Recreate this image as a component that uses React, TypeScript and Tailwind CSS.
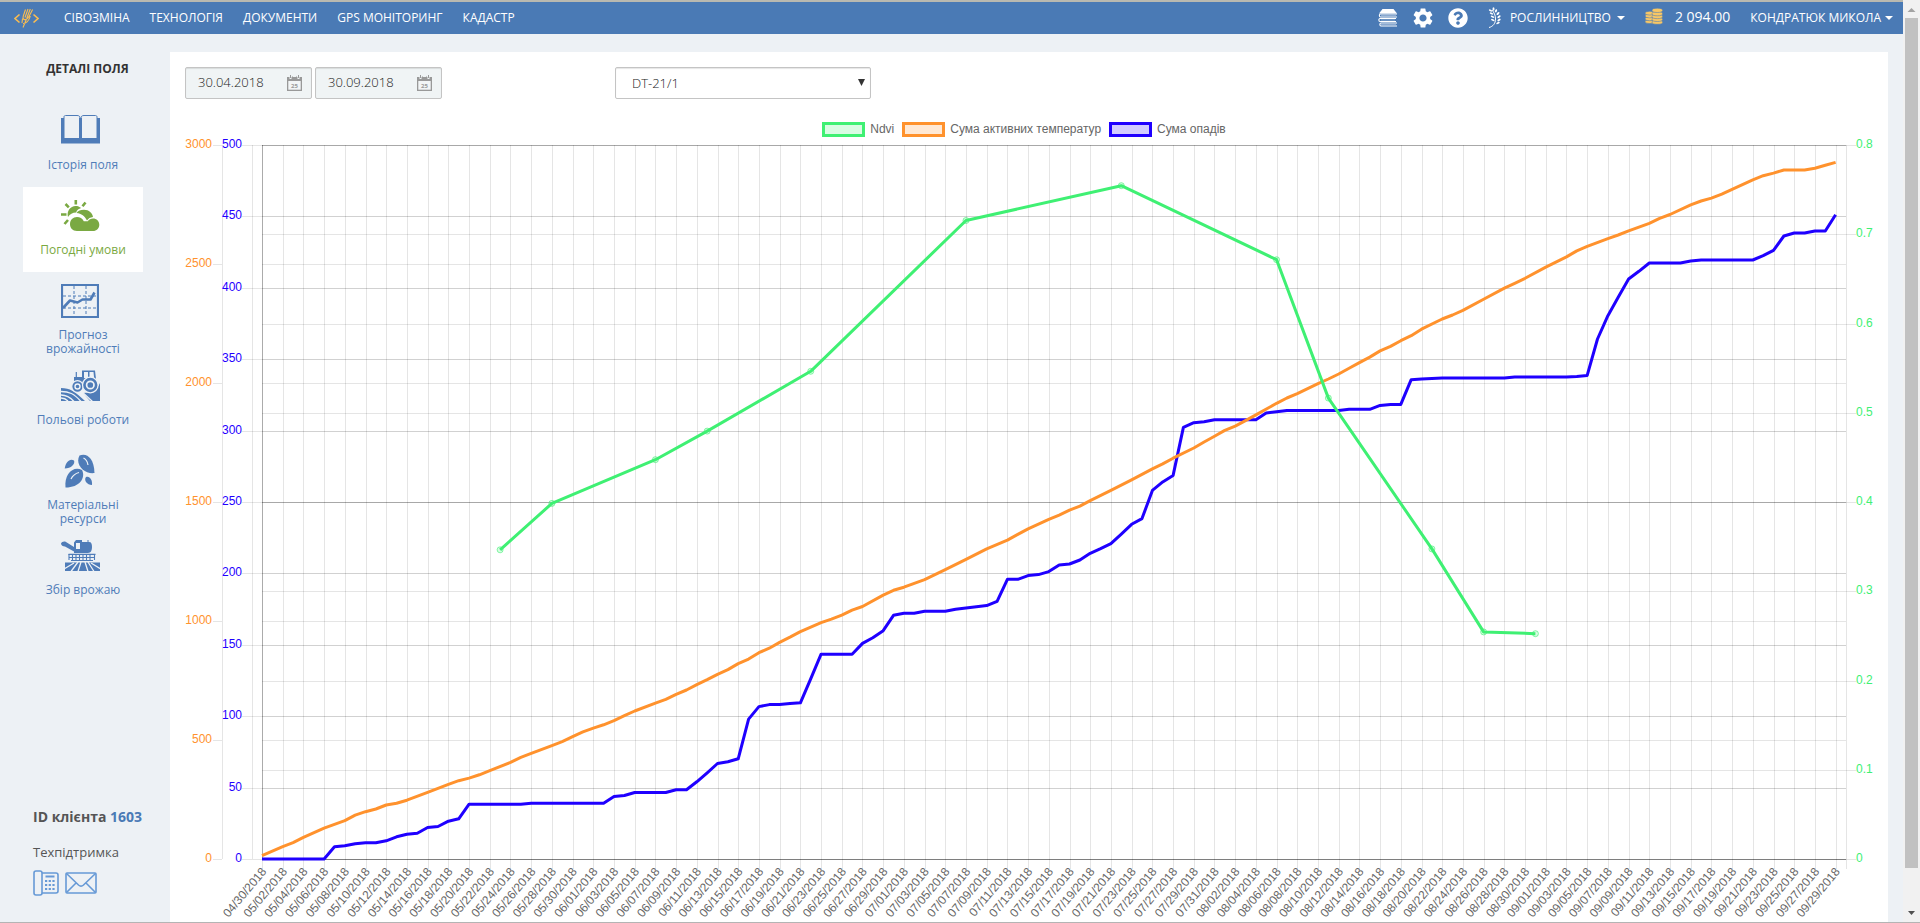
import type { ReactNode } from "react";
import { MdSettings } from "react-icons/md";
import { FaQuestionCircle } from "react-icons/fa";

type Point = [day: number, value: number];

const NAV = ["СІВОЗМІНА", "ТЕХНОЛОГІЯ", "ДОКУМЕНТИ", "GPS МОНІТОРИНГ", "КАДАСТР"];

const NDVI: Point[] = [
  [23, 0.347], [28, 0.399], [38, 0.448], [43, 0.48], [53, 0.547], [68, 0.716], [83, 0.755],
  [98, 0.672], [103, 0.517], [113, 0.348], [118, 0.255], [123, 0.253],
];

const TEMPERATURE: Point[] = [
  [0, 16], [2, 54], [3, 71], [4, 93], [6, 132], [8, 163], [9, 186], [10, 201], [11, 212], [12, 229],
  [13, 236], [14, 249], [16, 282], [18, 316], [19, 331], [20, 342], [21, 356], [22, 373], [24, 408],
  [25, 429], [26, 446], [28, 478], [29, 495], [30, 516], [31, 536], [32, 552], [33, 566], [34, 583],
  [35, 604], [36, 624], [38, 657], [39, 673], [40, 694], [41, 712], [42, 735], [43, 756], [44, 778],
  [45, 798], [46, 823], [47, 842], [48, 869], [49, 888], [50, 912], [51, 934], [52, 957], [54, 995],
  [55, 1010], [56, 1027], [57, 1048], [58, 1063], [60, 1111], [61, 1131], [62, 1144], [64, 1176],
  [66, 1218], [68, 1261], [70, 1305], [72, 1342], [73, 1366], [74, 1389], [76, 1429], [77, 1447],
  [78, 1468], [79, 1485], [80, 1508], [82, 1551], [84, 1595], [86, 1641], [87, 1662], [88, 1686],
  [90, 1729], [91, 1754], [92, 1778], [93, 1803], [94, 1821], [95, 1844], [96, 1868], [98, 1917],
  [99, 1939], [100, 1957], [102, 1999], [103, 2019], [104, 2040], [105, 2064], [106, 2088],
  [107, 2111], [108, 2137], [109, 2156], [110, 2180], [111, 2201], [112, 2228], [114, 2271],
  [115, 2288], [116, 2307], [118, 2354], [120, 2401], [121, 2421], [122, 2442], [124, 2489],
  [126, 2532], [127, 2557], [128, 2576], [130, 2609], [131, 2624], [132, 2641], [134, 2673],
  [135, 2694], [136, 2710], [138, 2751], [139, 2767], [140, 2779], [141, 2796], [142, 2816],
  [144, 2856], [145, 2873], [146, 2884], [147, 2897], [149, 2897], [150, 2904], [151, 2917], [152, 2929],
];

const RAIN: Point[] = [
  [0, 0.4], [6, 0.4], [7, 8.9], [8, 9.6], [9, 11], [10, 11.7], [11, 11.7], [12, 13.1], [13, 15.9],
  [14, 17.7], [15, 18.4], [16, 22.4], [17, 23.1], [18, 26.8], [19, 28.5], [20, 38.7], [25, 38.7],
  [26, 39.4], [33, 39.4], [34, 44.1], [35, 44.8], [36, 46.9], [39, 46.9], [40, 48.8], [41, 48.8],
  [42, 54.4], [43, 60.7], [44, 67.2], [45, 68.4], [46, 70.5], [47, 98.3], [48, 107.1], [49, 108.5],
  [50, 108.5], [51, 109.2], [52, 109.7], [53, 126.5], [54, 143.8], [57, 143.8], [58, 151.3],
  [59, 155.3], [60, 160.2], [61, 171], [62, 172.4], [63, 172.4], [64, 173.8], [66, 173.8],
  [67, 175.2], [68, 176.1], [69, 177], [70, 177.8], [71, 180.8], [72, 196.2], [73, 196.2],
  [74, 198.8], [75, 199.5], [76, 201.6], [77, 206.3], [78, 206.9], [79, 209.7], [80, 214.4],
  [81, 217.7], [82, 221.2], [83, 227.9], [84, 234.7], [85, 238.7], [86, 258.5], [87, 264.4],
  [88, 269], [89, 302.6], [90, 305.9], [91, 306.6], [92, 308], [96, 308], [97, 312.7], [98, 313.6],
  [99, 314.5], [104, 314.5], [105, 315.3], [107, 315.3], [108, 318], [109, 318.7], [110, 318.7],
  [111, 336], [112, 336.5], [113, 336.8], [114, 337.2], [120, 337.2], [121, 337.9], [126, 337.9],
  [127, 338.3], [128, 339], [129, 364.5], [130, 380.8], [131, 393.7], [132, 406.5], [133, 411.9],
  [134, 417.7], [137, 417.7], [138, 419.1], [139, 419.8], [144, 419.8], [145, 422.8], [146, 426.6],
  [147, 436.6], [148, 438.7], [149, 438.7], [150, 440.1], [151, 440.1], [152, 451.5],
];

const LEGEND = [
  { label: "Ndvi", box: "border-[#3ff073] bg-[#d9fce3]" },
  { label: "Сума активних температур", box: "border-[#ff922d] bg-[#ffe9d5]" },
  { label: "Сума опадів", box: "border-[#1f00ff] bg-[#d2ccff]" },
];

// Plot area inside the chart's view box
const LEFT = 77;
const RIGHT = 1661;
const TOP = 12;
const BOTTOM = 726;
const DAYS = 153;

const xOf = (day: number) => LEFT + ((RIGHT - LEFT) * day) / DAYS;
const yOf = (value: number, max: number) => BOTTOM - ((BOTTOM - TOP) * value) / max;
const crisp = (n: number) => Math.round(n) + 0.5;
const toLine = (points: Point[], max: number) =>
  points.map(([d, v]) => `${xOf(d).toFixed(1)},${(yOf(v, max) + 0.5).toFixed(1)}`).join(" ");
const range = (n: number) => Array.from({ length: n }, (_, i) => i);

const dateLabel = (day: number) => {
  const date = new Date(Date.UTC(2018, 3, 30 + day));
  const mm = String(date.getUTCMonth() + 1).padStart(2, "0");
  const dd = String(date.getUTCDate()).padStart(2, "0");
  return `${mm}/${dd}/${date.getUTCFullYear()}`;
};

function Chart() {
  const ndviTicks = range(9).map((i) => i / 10);
  const tempTicks = range(7).map((i) => i * 500);
  const rainTicks = range(11).map((i) => i * 50);

  return (
    <svg
      viewBox="0 0 1688 787"
      className="block h-auto w-full font-['Liberation_Sans',Arial,sans-serif] text-[12px]"
      role="img"
      aria-label="Ndvi, сума активних температур, сума опадів"
    >
      <g stroke="#000" strokeOpacity="0.1">
        {range(77).map((i) => (
          <line key={i} x1={crisp(xOf(i * 2))} x2={crisp(xOf(i * 2))} y1={TOP} y2={BOTTOM + 10} />
        ))}
        <line x1={RIGHT + 0.5} x2={RIGHT + 0.5} y1={TOP} y2={BOTTOM + 10} />
        <line x1={37.5} x2={37.5} y1={TOP} y2={BOTTOM} />
        <line x1={67.5} x2={67.5} y1={TOP} y2={BOTTOM} />
        {ndviTicks.map((v) => (
          <line key={v} x1={LEFT} x2={RIGHT + 10} y1={crisp(yOf(v, 0.8))} y2={crisp(yOf(v, 0.8))} />
        ))}
        {tempTicks.map((v) => (
          <g key={v}>
            <line x1={28} x2={37} y1={crisp(yOf(v, 3000))} y2={crisp(yOf(v, 3000))} />
            <line x1={LEFT} x2={RIGHT} y1={crisp(yOf(v, 3000))} y2={crisp(yOf(v, 3000))} />
          </g>
        ))}
        {rainTicks.map((v) => (
          <g key={v}>
            <line x1={57} x2={LEFT} y1={crisp(yOf(v, 500))} y2={crisp(yOf(v, 500))} />
            <line x1={LEFT} x2={RIGHT} y1={crisp(yOf(v, 500))} y2={crisp(yOf(v, 500))} strokeOpacity="0.18" />
          </g>
        ))}
      </g>
      <g stroke="#000">
        <line x1={LEFT + 0.5} x2={LEFT + 0.5} y1={TOP} y2={BOTTOM} strokeOpacity="0.25" />
        <line x1={LEFT} x2={RIGHT} y1={BOTTOM + 0.5} y2={BOTTOM + 0.5} strokeOpacity="0.25" />
      </g>

      <g fill="none" strokeWidth="3" strokeLinejoin="round">
        <polyline points={toLine(RAIN, 500)} stroke="#1f00ff" />
        <polyline points={toLine(TEMPERATURE, 3000)} stroke="#ff922d" />
        <polyline points={toLine(NDVI, 0.8)} stroke="#3ff073" />
      </g>
      {NDVI.map(([d, v]) => (
        <circle key={d} cx={xOf(d)} cy={yOf(v, 0.8) + 0.5} r="3" fill="#3ff073" fillOpacity="0.2" stroke="#3ff073" strokeOpacity="0.6" />
      ))}

      <g fill="#ff922d" textAnchor="end">
        {tempTicks.map((v) => (
          <text key={v} x={27} y={yOf(v, 3000) + 3}>{v}</text>
        ))}
      </g>
      <g fill="#1f00ff" textAnchor="end">
        {rainTicks.map((v) => (
          <text key={v} x={57} y={yOf(v, 500) + 3}>{v}</text>
        ))}
      </g>
      <g fill="#3ff073">
        {ndviTicks.map((v) => (
          <text key={v} x={1671} y={yOf(v, 0.8) + 3}>{v}</text>
        ))}
      </g>
      <g fill="#666" textAnchor="end">
        {range(77).map((i) => (
          <text key={i} transform={`translate(${xOf(i * 2) + 5} ${BOTTOM + 13}) rotate(-50)`}>
            {dateLabel(i * 2)}
          </text>
        ))}
      </g>
    </svg>
  );
}

function LogoIcon() {
  return (
    <svg width="25" height="20" viewBox="0 0 25 20" fill="none" stroke="#f9bd52" strokeWidth="1.6">
      <path d="M5.500 6.500 1 10.500l4.500 4M19.500 6.500l4.500 4-4.500 4" />
      <path
        d="M9 19.500 12.500 11M11.500 1.500 9.300 8c-.8 2.500.3 4 2.200 3.500M14 1 11 9.500M16.300 1l-3.500 9M18.600 1.500 15 8.500c-.8 1.500-2 2.700-3.500 3M9 15.500c3 .3 6-3 7.300-7.500M8.500 10.500 8 15"
        strokeWidth="1.100"
      />
    </svg>
  );
}

function BooksIcon() {
  return (
    <svg width="20" height="20" viewBox="0 0 20 20" fill="#fff">
      <path d="M4.500 1h11L19 5.500H1z" />
      <g fill="none" stroke="#fff" strokeWidth="1.100">
        <path d="M19 6H2.500C1 6 1 9 2.500 9H19M18 10.500H2c-1.500 0-1.500 3 0 3h16M19 15H3c-1.500 0-1.500 3 0 3h16" />
        <path d="M3 7.500h15M3 12h14M3 16.500h15" strokeOpacity=".35" />
      </g>
    </svg>
  );
}

function WheatIcon() {
  return (
    <svg width="14" height="22" viewBox="0 0 14 22" fill="#fff">
      <path d="M1 20.500c4-1 6.500-4 6.500-8.500C7.500 8 6 5.500 4 3" fill="none" stroke="#fff" strokeWidth="1" />
      <g>
        <ellipse cx="5.500" cy="2" rx="1" ry="1.700" />
        <ellipse cx="2.500" cy="3.500" rx="1.800" ry=".9" transform="rotate(25 2.500 3.500)" />
        <ellipse cx="8" cy="3.800" rx="1" ry="1.700" transform="rotate(25 8 3.800)" />
        <ellipse cx="3.500" cy="6.500" rx="1.900" ry=".9" transform="rotate(25 3.500 6.500)" />
        <ellipse cx="10" cy="6.500" rx="1" ry="1.900" transform="rotate(45 10 6.500)" />
        <ellipse cx="4.500" cy="9.800" rx="1.900" ry=".9" transform="rotate(25 4.500 9.800)" />
        <ellipse cx="11" cy="9.800" rx="1" ry="1.900" transform="rotate(50 11 9.800)" />
        <ellipse cx="4.800" cy="13" rx="1.900" ry=".9" transform="rotate(25 4.800 13)" />
        <ellipse cx="11" cy="13" rx="1" ry="1.900" transform="rotate(55 11 13)" />
        <ellipse cx="10" cy="16" rx="1" ry="1.900" transform="rotate(60 10 16)" />
      </g>
    </svg>
  );
}

function CoinsIcon() {
  return (
    <svg width="18" height="18" viewBox="0 0 19 18" fill="#f8c765" stroke="#4a7ab5" strokeWidth=".6">
      {[15, 12, 9, 6].map((y) => (
        <ellipse key={y} cx="5" cy={y} rx="4.900" ry="2" />
      ))}
      {[15.500, 12.500, 9.500, 6.500, 3].map((y) => (
        <ellipse key={y} cx="13" cy={y} rx="5.600" ry="2.300" />
      ))}
    </svg>
  );
}

function Caret() {
  return (
    <svg width="8" height="4" viewBox="0 0 8 4" fill="currentColor">
      <path d="M0 0h8L4 4z" />
    </svg>
  );
}

function CalendarIcon() {
  return (
    <svg width="15" height="16" viewBox="0 0 15 16">
      <path d="M0 2h2.500v2h2V2h6v2h2V2H15v14H0z" fill="#999" />
      <path d="M3 0h1v3H3zM11 0h1v3h-1zM5 1.500h1V3H5zM9 1.500h1V3H9z" fill="#999" />
      <path d="M1.300 6h12.400v8.700H1.300z" fill="#f2f5f6" />
      <text x="7.500" y="12.800" textAnchor="middle" fontSize="6" fontWeight="700" fill="#999">25</text>
    </svg>
  );
}

function BookIcon() {
  return (
    <svg width="39" height="34" viewBox="0 0 39 34" fill="none" stroke="currentColor">
      <path d="M0 4h3v20h33V4h3v25.500H0z" fill="currentColor" stroke="none" />
      <path d="M3 24.500V3c0-1 .6-1.500 1.500-1.500H16c2 0 3 .8 3 2.500v20.500M36 24.500V3c0-1-.6-1.500-1.500-1.500H23c-2 0-3 .8-3 2.500v20.500" />
      <path d="M19.500 4v22" strokeWidth="3" />
    </svg>
  );
}

function WeatherIcon() {
  return (
    <svg width="39" height="34" viewBox="0 0 39 34" fill="currentColor">
      <path d="M14.800 1v4.500M4.500 5l3.300 3.300M24.500 3.500l-3 3.800M0 15.500h5.500M3.500 25l3.500-4" stroke="currentColor" strokeWidth="2.600" />
      <path d="M7 18c-1.600-6 2.500-11 7.500-11 2.400 0 4 .6 5.600 2.100-2.400.7-4.100 2.100-5 4.400-3.700 0-6.100 1.500-8.100 4.500z" />
      <path d="M15.500 14c1.500-2.500 4-3.300 7.500-3.300 5 0 8.500 3.300 9 7.300-2.700.3-4.700 1.500-6 3.500-2.300-4.500-5.500-6.900-10.500-7.500z" />
      <path d="M16 32c-4.500 0-7-3-7-6.700 0-4.300 3-7.300 7-7.300 3 0 5.300 1.300 6.800 4.200h4C28 20.300 29.800 19.500 32 19.500c3.600 0 6.300 2.600 6.300 6.200S35.600 32 32 32z" />
    </svg>
  );
}

function ForecastIcon() {
  return (
    <svg width="38" height="34" viewBox="0 0 38 34" fill="none" stroke="currentColor">
      <path d="M1 1h36v32H1z" strokeWidth="2.200" />
      <path d="M13 2v30M25 2v30M2 12h34M2 24h34" strokeDasharray="3 2" />
      <path d="m2 24 7-7.500 7.500 2 5-3h8l4-7" strokeWidth="2.600" strokeLinejoin="round" />
    </svg>
  );
}

function TractorIcon() {
  return (
    <svg width="39" height="34" viewBox="0 0 39 34" fill="currentColor">
      <path d="M13 16V8h8V1.500h13L35 10l-1 5z" />
      <path d="M23 3h4v6h-4zM28.500 3h4l.6 6h-4.600z" fill="#eef2f6" />
      <path d="M15.300 3v6" stroke="currentColor" strokeWidth="1.200" />
      <path d="M0 19c9 0 14 3.500 24 13H0zM22 24c8 0 14-3 17-10v18H29z" />
      <path d="M0 22.500c8 0 13 2 20 10M0 26c6 0 9 2 13 6.500M0 29c3 0 5 1 7 3M20 22l12 11" stroke="#eef2f6" strokeWidth="1.300" fill="none" />
      <g stroke="#eef2f6">
        <circle cx="16.500" cy="17.500" r="5.800" strokeWidth="1.300" />
        <circle cx="29.300" cy="16" r="7.800" strokeWidth="1.300" />
        <circle cx="16.500" cy="17.500" r="2.500" fill="none" strokeWidth="1.400" />
        <circle cx="29.300" cy="16" r="3.700" fill="none" strokeWidth="1.700" />
      </g>
    </svg>
  );
}

function SeedsIcon() {
  return (
    <svg width="39" height="34" viewBox="0 0 39 34" fill="currentColor">
      <path d="M18.500 1.500C25-1.500 33 3 33.500 19 24 20.500 13.500 11 18.500 1.500z" />
      <path d="M21 16c4 8-2.500 17.500-16.500 17.500C3 20.500 12 11.500 21 16z" />
      <path d="M13 6.500c1.500 3.500-3 8-9.300 8C4.500 8 9 4 13 6.500z" />
      <path d="M25 23c3.500-1.500 6.500 2.500 6 8-5-.2-8.500-4.500-6-8z" />
      <path d="M22.500 4c2 1 4 3.500 4.500 7M18 18.500c-4 1-6.500 3.500-8 6.500" stroke="#eef2f6" strokeWidth="1.200" fill="none" />
    </svg>
  );
}

function HarvesterIcon() {
  return (
    <svg width="39" height="34" viewBox="0 0 39 34" fill="currentColor">
      <path d="M0 4.500C.5 3 3 2 5 3l8 5v4.500L4 7.500C2 7.500 0 6.500 0 4.500z" />
      <path d="M13 14V3.500L15 1h6v2h7c2.500 0 3 2 3 5s-1 6-4 6z" />
      <path d="M15 4h4v6h-4z" fill="#eef2f6" />
      <path d="M27 1v3" stroke="currentColor" />
      <path d="M7.500 15.300h27M10 21.500h22" stroke="currentColor" strokeWidth="1.200" />
      <path d="M8 15v6M11.500 15v6M15 15v6M18.500 15v6M22 15v6M25.500 15v6M29 15v6M33.500 15v6M8.500 18.500h25" stroke="currentColor" strokeWidth="1.100" />
      <path d="M4 23.500h35V32H4z" />
      <path d="m3 30 10-6M10 32.500 17 23M17 32.500l3-9.500M27 32.500 24 23M33 32.500 27 23M40 30l-10-6" stroke="#eef2f6" strokeWidth="1.300" />
    </svg>
  );
}

function PhoneIcon() {
  return (
    <svg width="26" height="26" viewBox="0 0 26 26" fill="none" stroke="#6699d6" strokeWidth="1.600">
      <rect x="1" y="1" width="8" height="24" rx="2" />
      <path d="M9 3h14c1.300 0 2 .7 2 2v16c0 1.300-.7 2-2 2H9" />
      <path d="M12.500 6.500h9" strokeWidth="2" />
      <path d="M12 11h10M12 15h10M12 19h10" strokeWidth="2" strokeDasharray="2.200 1.500" />
    </svg>
  );
}

function MailIcon() {
  return (
    <svg width="32" height="22" viewBox="0 0 32 22" fill="none" stroke="#6699d6" strokeWidth="1.600">
      <rect x="1" y="1" width="30" height="20" rx="1" />
      <path d="m1.500 1.500 12 11.500c1.500 1.300 3.500 1.300 5 0l12-11.500M1.500 20.500 11 11M30.500 20.500 21 11" />
    </svg>
  );
}

const MENU: { label: string; icon: ReactNode; active?: boolean }[] = [
  { label: "Історія поля", icon: <BookIcon /> },
  { label: "Погодні умови", icon: <WeatherIcon />, active: true },
  { label: "Прогноз врожайності", icon: <ForecastIcon /> },
  { label: "Польові роботи", icon: <TractorIcon /> },
  { label: "Матеріальні ресурси", icon: <SeedsIcon /> },
  { label: "Збір врожаю", icon: <HarvesterIcon /> },
];

function Header() {
  return (
    <header className="flex h-8 items-center bg-[#4a7ab5] pr-[10px] pl-[14px] text-[12px] text-white">
      <a href="#" aria-label="Головна">
        <LogoIcon />
      </a>
      <nav className="ml-[25px] flex gap-5">
        {NAV.map((item) => (
          <a key={item} href="#">{item}</a>
        ))}
      </nav>
      <div className="ml-auto flex items-center">
        <div className="flex items-center gap-[13px]">
          <button aria-label="Журнал"><BooksIcon /></button>
          <button aria-label="Налаштування"><MdSettings size={24} /></button>
          <button aria-label="Допомога"><FaQuestionCircle size={20} /></button>
        </div>
        <button className="ml-5 flex items-center gap-[6px]">
          <span className="mr-[2px]"><WheatIcon /></span>
          РОСЛИННИЦТВО
          <Caret />
        </button>
        <span className="ml-5 flex items-center gap-3 text-[14px] leading-5">
          <span className="pb-1"><CoinsIcon /></span>
          <span className="pb-[2px]">2 094.00</span>
        </span>
        <button className="ml-5 flex items-center gap-1">
          КОНДРАТЮК МИКОЛА
          <Caret />
        </button>
      </div>
    </header>
  );
}

function Sidebar() {
  return (
    <aside className="flex w-[170px] shrink-0 flex-col">
      <h1 className="mt-[26px] pl-[5px] text-center text-[12px] leading-[18px] font-bold text-[#333]">ДЕТАЛІ ПОЛЯ</h1>
      <nav className="mt-6 ml-[23px] flex w-[120px] flex-col">
        {MENU.map(({ label, icon, active }) => (
          <a
            key={label}
            href="#"
            className={`flex h-[85px] flex-col items-center px-3 pt-3 text-center text-[12px] leading-[14px] ${
              active ? "bg-white text-[#7aa942]" : "text-[#4f7cb8]"
            }`}
          >
            <span className="mr-[6px] flex h-[34px] items-center">{icon}</span>
            <span className="mt-[10px]">{label}</span>
          </a>
        ))}
      </nav>
      <div className="mt-auto pb-[26px] pl-[33px] text-[#555]">
        <p className="text-[14px] leading-5 font-bold">
          ID клієнта <span className="text-[#4a7ab5]">1603</span>
        </p>
        <p className="mt-[15px] text-[13px] leading-5">Техпідтримка</p>
        <div className="mt-2 flex items-center gap-[6px]">
          <a href="#" aria-label="Телефон"><PhoneIcon /></a>
          <a href="#" aria-label="Пошта"><MailIcon /></a>
        </div>
      </div>
    </aside>
  );
}

function DateField({ label, value }: { label: string; value: string }) {
  return (
    <div className="flex h-8 w-[127px] items-center rounded-xs border border-[#c4c4c4] bg-[#f0f4f5] pr-[9px] pl-3 shadow-[inset_0_1px_1px_rgba(0,0,0,0.1)]">
      <input aria-label={label} defaultValue={value} className="w-full min-w-0 bg-transparent text-[13px] font-light text-[#222] outline-none" />
      <button aria-label="Календар"><CalendarIcon /></button>
    </div>
  );
}

function Filters() {
  return (
    <div className="flex items-center">
      <div className="flex gap-[3px]">
        <DateField label="Початок періоду" value="30.04.2018" />
        <DateField label="Кінець періоду" value="30.09.2018" />
      </div>
      <div className="relative ml-[173px] w-[256px]">
        <select
          aria-label="Поле"
          className="h-8 w-full appearance-none rounded-xs border border-[#c4c4c4] bg-white pt-[2px] pl-4 text-[13px] font-light text-[#222] shadow-[inset_0_1px_1px_rgba(0,0,0,0.1)]"
        >
          <option>DT-21/1</option>
        </select>
        <svg className="pointer-events-none absolute top-3 right-[6px]" width="7" height="7" viewBox="0 0 7 7" fill="#333">
          <path d="M0 0h7L3.500 7z" />
        </svg>
      </div>
    </div>
  );
}

function Legend() {
  return (
    <ul className="mt-[22px] flex justify-center gap-2 pr-[10px] font-['Liberation_Sans',Arial,sans-serif] text-[12px] leading-4 text-[#666]">
      {LEGEND.map(({ label, box }) => (
        <li key={label} className="flex items-center gap-[5px]">
          <span className={`h-[15px] w-[43px] border-3 ${box}`} />
          {label}
        </li>
      ))}
    </ul>
  );
}

function Scrollbar() {
  return (
    <div className="flex w-[17px] shrink-0 flex-col items-center bg-[#f1f1f1]" aria-hidden="true">
      <svg width="17" height="18" viewBox="0 0 17 18" fill="#a3a3a3">
        <path d="M4.500 12h8l-4-4z" />
      </svg>
      <div className="w-[13px] grow bg-[#c1c1c1]" />
      <svg className="mt-9" width="17" height="18" viewBox="0 0 17 18" fill="#505050">
        <path d="M5 7h7l-3.500 4z" />
      </svg>
    </div>
  );
}

export default function App() {
  return (
    <div className="flex min-h-screen border-b border-[#b4b4b4] bg-[#edf1f5] font-['Open_Sans','Noto_Sans',sans-serif]">
      <div className="flex min-w-0 grow flex-col border-t-2 border-[#b9b9b0]">
        <Header />
        <div className="flex grow">
          <Sidebar />
          <main className="mt-[18px] mr-[15px] min-w-0 grow bg-white px-[15px] pt-[15px]">
            <Filters />
            <Legend />
            <div className="-mt-1">
              <Chart />
            </div>
          </main>
        </div>
      </div>
      <Scrollbar />
    </div>
  );
}
